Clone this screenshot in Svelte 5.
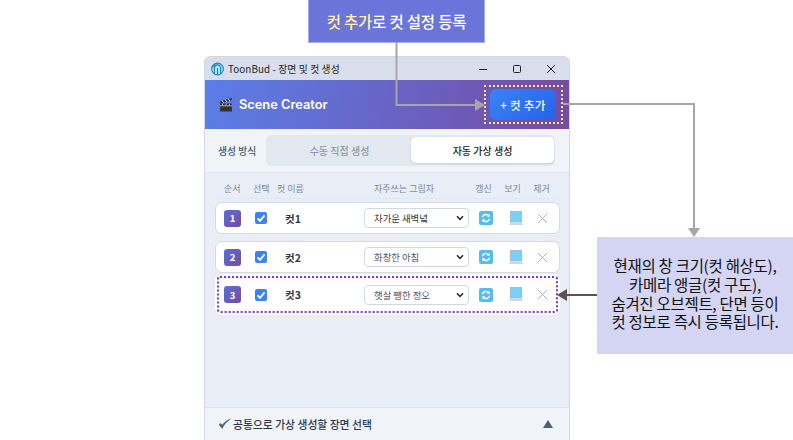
<script>
  const rows = [
    { n: 1, name: "컷1", shadow: "차가운 새벽녘", strong: true },
    { n: 2, name: "컷2", shadow: "화창한 아침" },
    { n: 3, name: "컷3", shadow: "햇살 쨍한 정오", marked: true },
  ];
</script>

<div class="page">
  <div class="callout-top"><span class="hl">컷 추가</span>로 컷 설정 등록</div>

  <div class="window">
    <div class="titlebar">
      <svg class="logo" width="13" height="14" viewBox="0 0 13 14" fill="none" stroke="#1b86bd" stroke-width="1.2">
        <circle cx="6.5" cy="7" r="5.8" fill="#bfe6f5" />
        <path d="M3.4 11.4V6A3.1 3.1 0 0 1 9.6 6V11.4M6.5 12.6V6M1 5.2A5.6 5.6 0 0 1 6.5 3.4" />
      </svg>
      <span class="wintitle">ToonBud - 장면 및 컷 생성</span>
      <div class="winbtns">
        <svg width="10" height="10" viewBox="0 0 10 10"><path d="M1 5.5h8" stroke="#222" stroke-width="1" /></svg>
        <svg width="10" height="10" viewBox="0 0 10 10"><rect x="1.5" y="1.5" width="7" height="7" rx="1" fill="none" stroke="#222" stroke-width="1" /></svg>
        <svg width="10" height="10" viewBox="0 0 10 10"><path d="M1 1l8 8M9 1l-8 8" stroke="#222" stroke-width="1" /></svg>
      </div>
    </div>

    <header class="head">
      <div class="brand">
        <svg width="14" height="15" viewBox="0 0 14 15">
          <path d="M1 4.5 12.6 1l.5 2L1.5 6.4Z" fill="#333" />
          <path d="M3 3.9 5 5.6M6 3 8 4.7M9 2.1l2 1.7" stroke="#ddd" stroke-width="1" />
          <rect x="1" y="6.5" width="12" height="8" rx="0.5" fill="#333" />
          <path d="M1 8.8h12M4 6.5 3 8.8M7.5 6.5l-1 2.3M11 6.5 10 8.8" stroke="#ccc" stroke-width="0.8" />
        </svg>
        <span>Scene Creator</span>
      </div>
      <button class="add">+ 컷 추가</button>
    </header>

    <div class="mode">
      <span class="mode-label">생성 방식</span>
      <div class="tabs">
        <div class="tab">수동 직접 생성</div>
        <div class="tab active">자동 가상 생성</div>
      </div>
    </div>

    <div class="body">
      <div class="cols">
        <span class="c-num">순서</span>
        <span class="c-check">선택</span>
        <span class="c-name">컷 이름</span>
        <span class="c-shadow">자주쓰는 그림자</span>
        <span class="c-act">갱신</span>
        <span class="c-act">보기</span>
        <span class="c-act">제거</span>
      </div>

      {#each rows as row}
        <div class="row" class:marked={row.marked}>
          <span class="num">{row.n}</span>
          <span class="check">
            <svg width="12" height="12" viewBox="0 0 12 12"><path d="M2.5 6.3 5 8.8 9.6 3.4" fill="none" stroke="#fff" stroke-width="1.8" /></svg>
          </span>
          <span class="name">{row.name}</span>
          <div class="select" class:strong={row.strong}>
            <span>{row.shadow}</span>
            <svg width="8" height="6" viewBox="0 0 8 6"><path d="M1 1.2 4 4.4 7 1.2" fill="none" stroke="#222" stroke-width="1.5" /></svg>
          </div>
          <span class="act first">
            <svg width="14" height="14" viewBox="0 0 14 14">
              <rect width="14" height="14" rx="2" fill="#53bdf0" />
              <path d="M3.3 6.2A3.8 3.8 0 0 1 10 5M10.7 7.8A3.8 3.8 0 0 1 4 9" fill="none" stroke="#fff" stroke-width="1.4" />
              <path d="M10.6 2.8v3H7.8ZM3.4 11.2v-3h2.8Z" fill="#fff" />
            </svg>
          </span>
          <span class="act view">
            <svg width="14" height="15" viewBox="0 0 14 15">
              <rect x="1.4" y="0.5" width="11.2" height="10.5" fill="#74d2fb" stroke="#a8aeca" stroke-width="0.8" />
              <path d="M1 11.6h12l1 2.4H0Z" fill="#d2d6db" />
            </svg>
          </span>
          <span class="act">
            <svg width="11" height="11" viewBox="0 0 11 11"><path d="M1 1l9 9" stroke="#a9b0c4" stroke-width="1" /><path d="M10 1l-9 9" stroke="#b8aec0" stroke-width="1" /></svg>
          </span>
        </div>
      {/each}
    </div>

    <footer class="foot">
      <svg class="tick" width="13" height="12" viewBox="0 0 13 12"><path d="M1 6.6 4.2 10.4C6 6.6 8.6 3.4 12.4 1 8.6 2.4 6 4.6 4.3 7.2L2.8 5.4Z" fill="#4f6277" stroke="#4f6277" stroke-width="0.6" /></svg>
      <span class="foot-text">공통으로 가상 생성할 장면 선택</span>
      <span class="tri"></span>
    </footer>
  </div>

  <svg class="wires" width="793" height="440" viewBox="0 0 793 440" fill="none">
    <path d="M396.5 42V105H476" stroke="#a6a6a6" stroke-width="2" />
    <path d="M475 99 485 105 475 111Z" fill="#a6a6a6" />
    <path d="M563 104H694V229" stroke="#a6a6a6" stroke-width="2" />
    <path d="M688 228 694 237 700 228Z" fill="#a6a6a6" />
    <path d="M597 295H566" stroke="#555" stroke-width="2" />
    <path d="M567 289 557 295 567 301Z" fill="#555" />
  </svg>

  <div class="addmark"></div>

  <div class="callout-side">
    현재의 창 크기(컷 해상도),<br />
    카메라 앵글(컷 구도),<br />
    숨겨진 오브젝트, 단면 등이<br />
    컷 정보로 즉시 등록됩니다.
  </div>
</div>

<style>
  :global(body) {
    margin: 0;
    background: #fff;
  }

  * {
    box-sizing: border-box;
  }

  .page {
    position: relative;
    width: 793px;
    height: 440px;
    overflow: hidden;
    padding: 56px 0 0 204px;
    font-family: "Noto Sans CJK KR", "Noto Sans", sans-serif;
  }

  .callout-top {
    position: absolute;
    left: 308px;
    top: 0;
    width: 177px;
    height: 43px;
    display: flex;
    align-items: center;
    justify-content: center;
    background: #6b75d9;
    border: 1px solid #a8aeea;
    border-top: 0;
    color: #fff;
    font-size: 15.5px;
    font-weight: 500;
    letter-spacing: -0.2px;
  }

  .hl {
    color: #fff2a0;
  }

  .window {
    width: 366px;
    height: 384px;
    display: flex;
    flex-direction: column;
    background: #e9edf6;
    border: 1px solid #d3d7e3;
    border-bottom: 0;
    border-radius: 6px 6px 0 0;
    overflow: hidden;
  }

  .titlebar {
    height: 23px;
    flex: none;
    display: flex;
    align-items: center;
    padding: 0 12px 0 6px;
    background: #d9deec;
  }

  .logo {
    margin-right: 4px;
  }

  .wintitle {
    font-size: 9.8px;
    color: #222;
    letter-spacing: 0.1px;
  }

  .winbtns {
    margin-left: auto;
    display: flex;
    gap: 24px;
    padding-right: 1px;
  }

  .head {
    height: 49px;
    flex: none;
    display: flex;
    align-items: center;
    justify-content: space-between;
    padding: 0 13px 0 14px;
    background: linear-gradient(100deg, #5a7ee8, #764ba2);
  }

  .brand {
    display: flex;
    align-items: center;
    gap: 6px;
    color: #fff;
    font-family: "Inter", "Noto Sans CJK KR", sans-serif;
    font-size: 12.8px;
    font-weight: 600;
  }

  .add {
    width: 66px;
    height: 31px;
    border: 0;
    border-radius: 6px;
    background: linear-gradient(135deg, #3b82f6, #2563eb);
    color: #fff;
    font-family: inherit;
    font-size: 11.5px;
    font-weight: 500;
    padding: 0;
    letter-spacing: 0.3px;
  }

  .mode {
    height: 44px;
    flex: none;
    display: flex;
    align-items: center;
    gap: 9px;
    padding: 0 14px 0 13px;
    background: #f0f4f9;
    border-bottom: 1px solid #e4e8f0;
  }

  .mode-label {
    width: 39px;
    flex: none;
    font-size: 9.8px;
    color: #4a5568;
    font-weight: 500;
    white-space: nowrap;
  }

  .tabs {
    width: 289px;
    height: 31px;
    display: grid;
    grid-template-columns: 1fr 1fr;
    padding: 2px 1px 3px 2px;
    background: #e2e8f0;
    border-radius: 6px;
  }

  .tab {
    display: flex;
    align-items: center;
    justify-content: center;
    font-size: 10px;
    font-weight: 500;
    color: #8a97a8;
    border-radius: 5px;
  }

  .tab.active {
    background: #fff;
    color: #222;
    box-shadow: 0 1px 2px rgba(0, 0, 0, 0.1);
  }

  .body {
    flex: 1;
    padding: 0 9px 0 10px;
  }

  .cols {
    height: 26px;
    display: flex;
    align-items: center;
    padding: 5px 0 0 9px;
    margin-bottom: 3px;
    border-bottom: 1px solid #e2e6ef;
    font-size: 9px;
    color: #7c8798;
    white-space: nowrap;
  }

  .c-num {
    width: 29px;
  }

  .c-check {
    width: 24px;
  }

  .c-name {
    width: 74px;
  }

  .c-shadow {
    width: 106px;
    margin-right: 12px;
    text-align: center;
  }

  .c-act {
    width: 29px;
    text-align: center;
  }

  .row {
    position: relative;
    height: 32px;
    display: flex;
    align-items: center;
    padding: 0 0 0 8px;
    margin: 0 0 7px;
    background: #fff;
    border: 1px solid #d3d9e6;
    border-radius: 7px;
  }

  .row.marked {
    height: 41px;
    margin: -6px 0 0;
    border-color: #fff;
  }

  .row.marked::after {
    content: "";
    position: absolute;
    inset: 1px;
    border: 2px dotted #7c2df0;
    border-radius: 3px;
  }

  .num {
    width: 17px;
    height: 17px;
    flex: none;
    display: flex;
    align-items: center;
    justify-content: center;
    border-radius: 3px;
    background: linear-gradient(135deg, #5a6fd8, #764ba2);
    color: #fff;
    font-size: 9.5px;
    font-weight: 700;
  }

  .check {
    width: 12px;
    height: 12px;
    flex: none;
    margin-left: 14px;
    border-radius: 2px;
    background: #3b82f6;
    display: flex;
  }

  .name {
    width: 97px;
    flex: none;
    padding-left: 18px;
    font-size: 10.5px;
    font-weight: 700;
    color: #2d3748;
  }

  .select {
    width: 105px;
    height: 20px;
    flex: none;
    display: flex;
    align-items: center;
    justify-content: space-between;
    padding: 0 4px 0 9px;
    border: 1px solid #d3d9e4;
    border-radius: 4px;
    font-size: 9.4px;
    color: #4a5568;
  }

  .select.strong {
    color: #333;
  }

  .act {
    width: 28px;
    flex: none;
    display: flex;
    justify-content: center;
  }

  .act.first {
    margin-left: 3px;
  }

  .act.view {
    padding-left: 3px;
  }

  .foot {
    height: 33px;
    flex: none;
    display: flex;
    align-items: center;
    padding: 0 16px 0 13px;
    background: #f0f4f9;
    border-top: 1px solid #dde2ea;
    font-size: 10.8px;
    font-weight: 500;
    color: #2d3748;
  }

  .tick {
    margin-right: 2px;
  }

  .tri {
    margin-left: auto;
    width: 0;
    height: 0;
    border-left: 5px solid transparent;
    border-right: 5px solid transparent;
    border-bottom: 8px solid #4a5f7a;
  }

  .wires {
    position: absolute;
    left: 0;
    top: 0;
    pointer-events: none;
  }

  .addmark {
    position: absolute;
    left: 484px;
    top: 85px;
    width: 79px;
    height: 39px;
    border: 2px dotted #f8e684;
  }

  .callout-side {
    position: absolute;
    left: 597px;
    top: 237px;
    width: 196px;
    height: 117px;
    display: flex;
    align-items: center;
    justify-content: center;
    text-align: center;
    background: #d3d5f3;
    color: #111;
    font-size: 15.5px;
    line-height: 18.7px;
    letter-spacing: -0.3px;
    white-space: nowrap;
    padding-bottom: 4px;
  }
</style>
